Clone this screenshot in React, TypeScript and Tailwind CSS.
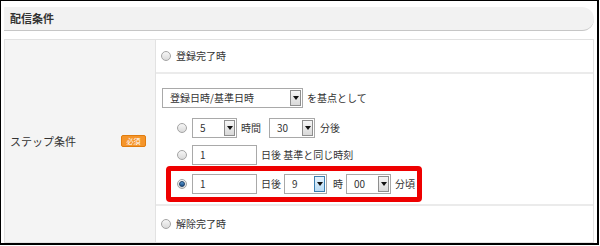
const Radio = ({ checked = false }: { checked?: boolean }) => (
  <span className="w-[10px] h-[10px] rounded-full border border-[#a4a4a4] bg-gradient-to-b from-[#f6f6f6] to-[#dadada] flex items-center justify-center shrink-0">
    {checked && <span className="w-[6px] h-[6px] rounded-full bg-gradient-to-b from-[#5b9bd5] to-[#1c4f86] border border-[#1a3d66]" />}
  </span>
);

const Arrow = () => (
  <span className="w-0 h-0 border-l-[3px] border-r-[3px] border-t-[4px] border-l-transparent border-r-transparent border-t-[#111]" />
);

const Select = ({
  value,
  width,
  active = false,
}: {
  value: string;
  width: string;
  active?: boolean;
}) => (
  <div className={`${width} h-[20px] border border-[#a9a9a9] bg-white flex items-center justify-between pl-[7px] pr-[1px]`}>
    <span>{value}</span>
    <span
      className={
        active
          ? "w-[11px] h-[16px] border border-[#3c7fb1] bg-gradient-to-b from-[#e5f3fd] to-[#b9dcf5] flex items-center justify-center"
          : "w-[11px] h-[16px] border border-[#8e8e8e] bg-gradient-to-b from-[#f6f6f6] to-[#d9d9d9] flex items-center justify-center"
      }
    >
      <Arrow />
    </span>
  </div>
);

const Input = ({ value }: { value: string }) => (
  <div className="w-[65px] h-[20px] border border-[#a9a9a9] bg-white flex items-center pl-[7px]">{value}</div>
);

export default function App() {
  return (
    <div className="w-[600px] h-[246px] bg-white text-[#333] text-[10px] font-['Noto_Sans_CJK_JP',sans-serif] leading-none">
      <div className="w-[599px] h-[245px] border-l border-t border-r-2 border-b-2 border-black pt-[6px] px-[3px]">
        <div className="h-[24px] rounded-r-[12px] bg-[#f2f2f2] border-b border-[#c6c6c6] flex items-center pl-[6px]">
          <h1 className="text-[11px] font-bold text-[#333]">配信条件</h1>
        </div>

        <div className="mt-[8px] h-[204px] w-[590px] border border-[#e2e2e2] flex">
          <div className="w-[151px] bg-[#f4f4f4] border-r border-[#e2e2e2] flex items-center justify-between pl-[5px] pr-[9px]">
            <span className="text-[11px]">ステップ条件</span>
            <span className="w-[25px] h-[12px] bg-[#f5952a] border border-[#e07c0e] rounded-[2px] text-white text-[7px] flex items-center justify-center">
              必須
            </span>
          </div>

          <div className="flex-1 flex flex-col">
            <div className="h-[34px] border-b-2 border-[#ebebeb] flex items-center gap-[5px] pl-[5px]">
              <Radio />
              <span>登録完了時</span>
            </div>

            <div className="flex-1 border-b-2 border-[#ebebeb] pt-[14px] pl-[6px] flex flex-col">
              <div className="flex items-center gap-[4px]">
                <Select value="登録日時/基準日時" width="w-[141px]" />
                <span>を基点として</span>
              </div>

              <div className="mt-[10px] pl-[15px] flex items-center">
                <Radio />
                <div className="ml-[5px]">
                  <Select value="5" width="w-[45px]" />
                </div>
                <span className="ml-[4px]">時間</span>
                <div className="ml-[8px]">
                  <Select value="30" width="w-[46px]" />
                </div>
                <span className="ml-[5px]">分後</span>
              </div>

              <div className="mt-[7px] pl-[15px] flex items-center">
                <Radio />
                <div className="ml-[5px]">
                  <Input value="1" />
                </div>
                <span className="ml-[4px]">日後 基準と同じ時刻</span>
              </div>

              <div className="mt-[1px] ml-[4px] w-[256px] h-[36px] border-[5px] border-[#ee0000] rounded-[4px] flex items-center pl-[6px]">
                <Radio checked />
                <div className="ml-[5px]">
                  <Input value="1" />
                </div>
                <span className="ml-[4px]">日後</span>
                <div className="ml-[3px]">
                  <Select value="9" width="w-[43px]" active />
                </div>
                <span className="ml-[6px]">時</span>
                <div className="ml-[3px]">
                  <Select value="00" width="w-[45px]" />
                </div>
                <span className="ml-[4px]">分頃</span>
              </div>
            </div>

            <div className="h-[36px] flex items-center gap-[5px] pl-[5px]">
              <Radio />
              <span>解除完了時</span>
            </div>
          </div>
        </div>
      </div>
    </div>
  );
}
